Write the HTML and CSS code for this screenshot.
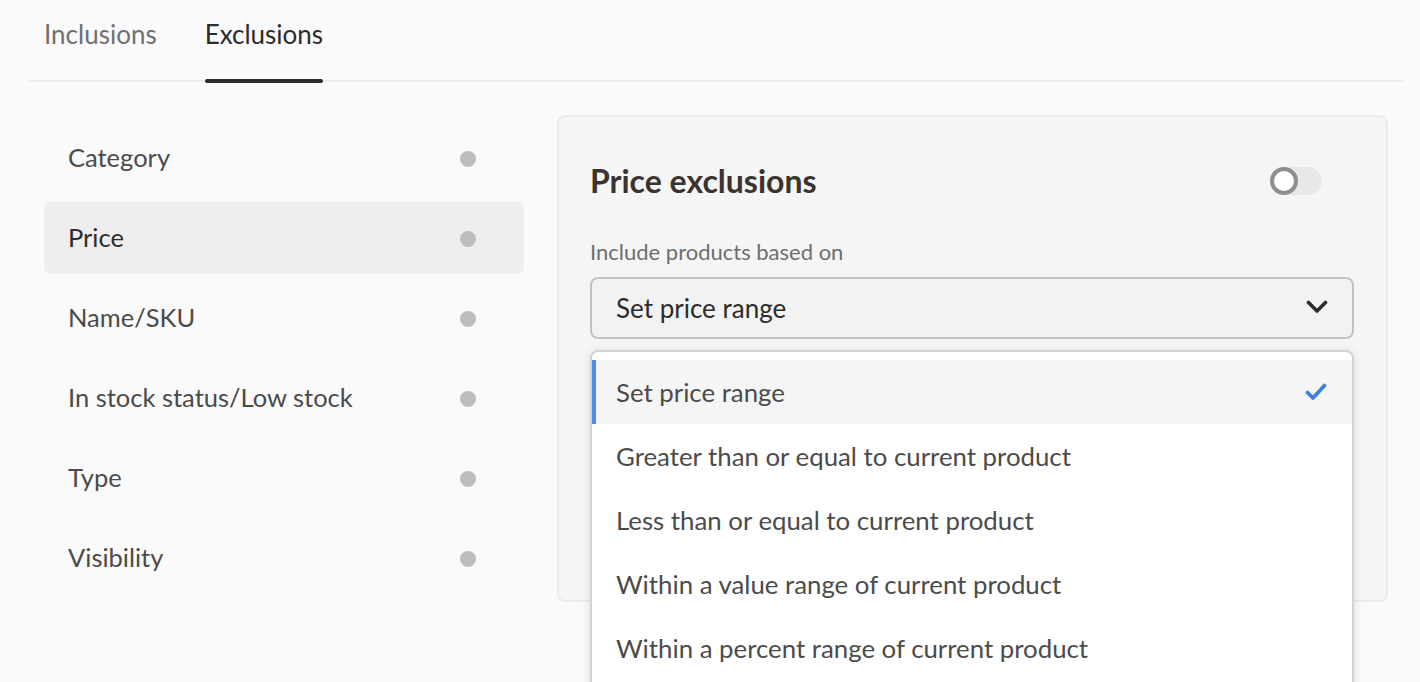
FILE: index.html
```html
<!DOCTYPE html>
<html lang="en">
<head>
<meta charset="utf-8">
<title>Exclusions</title>
<link rel="stylesheet" href="styles.css">
</head>
<body>
<div class="tabs">
  <div class="tab">Inclusions</div>
  <div class="tab active">Exclusions</div>
</div>
<div class="main">
  <nav class="sidebar">
    <div class="nav-item"><span>Category</span><i class="dot"></i></div>
    <div class="nav-item selected"><span>Price</span><i class="dot"></i></div>
    <div class="nav-item"><span>Name/SKU</span><i class="dot"></i></div>
    <div class="nav-item"><span>In stock status/Low stock</span><i class="dot"></i></div>
    <div class="nav-item"><span>Type</span><i class="dot"></i></div>
    <div class="nav-item"><span>Visibility</span><i class="dot"></i></div>
  </nav>
  <section class="panel">
    <div class="panel-head">
      <h2 class="title">Price exclusions</h2>
      <div class="toggle"><span class="knob"></span></div>
    </div>
    <div class="label">Include products based on</div>
    <div class="field">
      <div class="select">
        <span>Set price range</span>
        <svg class="chev" width="22" height="14" viewBox="0 0 22 14"><path d="M2.5 2.5 L11 11 L19.5 2.5" fill="none" stroke="#2c2c2c" stroke-width="3.6" stroke-linecap="round" stroke-linejoin="round"/></svg>
      </div>
      <div class="menu">
        <div class="opt current"><span>Set price range</span>
          <svg class="check" width="22" height="18" viewBox="0 0 22 18"><path d="M2.5 9.5 L8 15 L19.5 2.5" fill="none" stroke="#3d7ee6" stroke-width="3.6" stroke-linecap="round" stroke-linejoin="round"/></svg>
        </div>
        <div class="opt"><span>Greater than or equal to current product</span></div>
        <div class="opt"><span>Less than or equal to current product</span></div>
        <div class="opt"><span>Within a value range of current product</span></div>
        <div class="opt"><span>Within a percent range of current product</span></div>
      </div>
    </div>
  </section>
</div>
</body>
</html>
```
FILE: styles.css
```css
html, body {
  margin: 0;
  padding: 0;
}
body {
  background: #fafafa;
  font-family: "Lato", "Open Sans", sans-serif;
  color: #4b4b4b;
  width: 1420px;
  height: 682px;
  overflow: hidden;
}
.tabs {
  margin: 0 16px 0 28px;
  padding-left: 16px;
  height: 80px;
  border-bottom: 2px solid #ececec;
  display: flex;
  gap: 48px;
}
.tab {
  position: relative;
  font-size: 26px;
  line-height: 69px;
  color: #707070;
}
.tab.active {
  color: #2c2c2c;
}
.tab.active::after {
  content: "";
  position: absolute;
  left: 0;
  right: 0;
  bottom: -3px;
  height: 4px;
  border-radius: 2px;
  background: #2c2c2c;
}
.main {
  display: flex;
  padding: 33px 0 0 44px;
  gap: 33px;
}
.sidebar {
  width: 480px;
  padding-top: 7px;
  display: flex;
  flex-direction: column;
  gap: 8px;
}
.nav-item {
  height: 72px;
  border-radius: 7px;
  display: flex;
  align-items: center;
  justify-content: space-between;
  padding: 0 48px 0 24px;
  font-size: 25.5px;
  color: #4b4b4b;
}
.nav-item span {
  margin-top: -2px;
}
.nav-item.selected {
  background: #eeeeee;
  color: #2c2c2c;
}
.dot {
  width: 16px;
  height: 16px;
  border-radius: 50%;
  background: #bdbdbd;
  margin-top: 2px;
}
.panel {
  width: 831px;
  height: 487px;
  box-sizing: border-box;
  border: 2px solid #ebebeb;
  border-radius: 8px;
  background: #f5f5f5;
  padding: 32px 32px 0 31px;
}
.panel-head {
  display: flex;
  align-items: center;
  justify-content: space-between;
  height: 64px;
}
.title {
  margin: 0 0 2px 0;
  font-size: 32px;
  font-weight: 700;
  color: #3a332e;
}
.toggle {
  width: 52px;
  height: 28px;
  border-radius: 14px;
  background: #e8e8e8;
  margin-right: 32px;
  position: relative;
}
.knob {
  position: absolute;
  left: 0;
  top: 0;
  width: 28px;
  height: 28px;
  box-sizing: border-box;
  border-radius: 50%;
  border: 4px solid #8f8f8f;
  background: #ffffff;
}
.label {
  margin-top: 27px;
  font-size: 22px;
  line-height: 24px;
  color: #6e6e6e;
}
.field {
  position: relative;
  margin-top: 13px;
}
.select {
  height: 62px;
  box-sizing: border-box;
  border: 2px solid #c2c2c2;
  border-radius: 8px;
  background: #f2f2f2;
  display: flex;
  align-items: center;
  justify-content: space-between;
  padding: 0 24px 0 24px;
  font-size: 26px;
  color: #2c2c2c;
}
.chev {
  display: block;
  margin-top: -2px;
}
.menu {
  position: absolute;
  left: 0;
  right: 0;
  top: 73px;
  height: 360px;
  box-sizing: border-box;
  background: #ffffff;
  border: 2px solid #d3d3d3;
  border-radius: 8px;
  box-shadow: 0 2px 10px rgba(0, 0, 0, 0.12);
  padding-top: 8px;
}
.opt {
  height: 64px;
  display: flex;
  align-items: center;
  justify-content: space-between;
  padding: 0 25px 0 20px;
  border-left: 4px solid transparent;
  font-size: 25.8px;
  color: #4b4b4b;
}
.opt.current {
  background: #f5f5f5;
  border-left-color: #4a8cec;
}
.check {
  display: block;
}
```
